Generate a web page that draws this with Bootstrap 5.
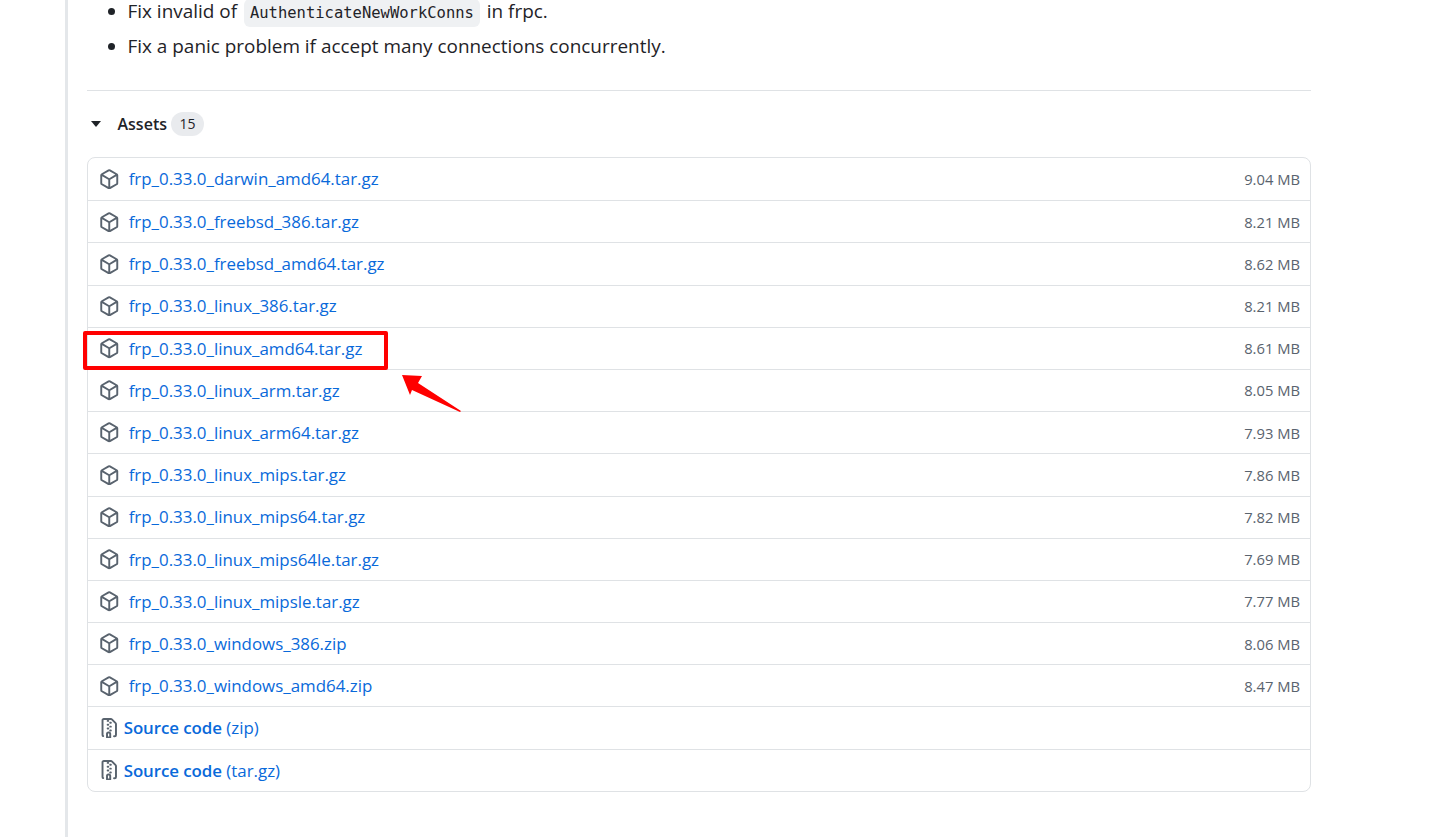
<!DOCTYPE html>
<html lang="en">
<head>
<meta charset="utf-8">
<title>frp release assets</title>
<link href="https://cdn.jsdelivr.net/npm/bootstrap@5.3.0/dist/css/bootstrap.min.css" rel="stylesheet">
<style>
html,body{height:837px;overflow:hidden}
body{background:#fff;color:#1f2328;font-family:"Open Sans","Noto Sans","Liberation Sans",sans-serif;font-size:17px;position:relative}
.rail{display:flow-root;margin-left:65px;width:1246px;height:837px;border-left:3.5px solid #e4e7ea;padding-left:18.5px}
.notes{margin:-6.5px 0 0;padding-left:41px;font-size:18.93px;line-height:35px}
.notes code{font-family:"DejaVu Sans Mono","Liberation Mono",monospace;font-size:15.5px;line-height:20px;color:#1f2328;background:#eff1f3;border-radius:6px;padding:4px 6px;margin:0 2px;display:inline-block}
.sep{height:1px;background:#dfe2e5;margin:26.5px 0 0}
.assets-head{height:66px;font-size:16px;font-weight:600}
.caret{width:0;height:0;border-left:5.5px solid transparent;border-right:5.5px solid transparent;border-top:6px solid #1f2328;margin:0 17px 0 4px}
.count{background:#e9ebee;border-radius:20px;font-size:14px;font-weight:400;padding:2px 8.5px;margin-left:4px;line-height:20px}
.asset-box{border:1px solid #dfe2e5;border-radius:8px;overflow:hidden}
.asset-row{height:42.2px;border-top:1px solid #dfe2e5;padding:0 10px 0 11.2px}
.asset-row:first-child{border-top:0}
.asset-row a{color:#0969da;text-decoration:none;font-size:16.9px;font-weight:500}
.asset-row .ico{width:20.5px;height:20.5px;fill:#59636e;margin-right:9.5px;flex:none}
.asset-row .ico-zip{margin-right:4.5px}
.strong-label{font-weight:600;letter-spacing:-.08px}
.ext{font-weight:400}
.size{color:#59636e;font-size:14.75px}
.callout{position:absolute;left:83px;top:331px;width:305px;height:39px;border:4px solid #f00;border-radius:2px}
.pointer{position:absolute;left:398px;top:370px}
</style>
</head>
<body>
<svg width="0" height="0" class="position-absolute">
<symbol id="pkg" viewBox="0 0 16 16"><path d="m8.878.392 5.25 3.045c.54.314.872.89.872 1.514v6.098a1.75 1.75 0 0 1-.872 1.514l-5.25 3.045a1.75 1.75 0 0 1-1.756 0l-5.25-3.045A1.75 1.75 0 0 1 1 11.049V4.951c0-.624.332-1.201.872-1.514L7.122.392a1.75 1.75 0 0 1 1.756 0ZM7.875 1.69l-4.63 2.685L8 7.133l4.755-2.758-4.63-2.685a.248.248 0 0 0-.25 0ZM2.5 5.677v5.372c0 .09.047.171.125.216l4.625 2.683V8.432Zm6.25 8.271 4.625-2.683a.25.25 0 0 0 .125-.216V5.677L8.75 8.432Z"/></symbol>
<symbol id="zipf" viewBox="0 0 16 16"><path d="M3.5 1.75v11.5c0 .09.048.173.126.217a.75.75 0 0 1-.752 1.298A1.748 1.748 0 0 1 2 13.25V1.75C2 .784 2.784 0 3.75 0h5.586c.464 0 .909.185 1.237.513l2.914 2.914c.329.328.513.773.513 1.237v8.586A1.75 1.75 0 0 1 12.25 15h-.5a.75.75 0 0 1 0-1.5h.5a.25.25 0 0 0 .25-.25V4.664a.25.25 0 0 0-.073-.177L9.513 1.573a.25.25 0 0 0-.177-.073H7.25a.75.75 0 0 1 0 1.5h-.5a.75.75 0 0 1 0-1.5h-3a.25.25 0 0 0-.25.25Zm3.75 8.75h.5c.966 0 1.75.784 1.75 1.75v3a.75.75 0 0 1-.75.75h-2.5a.75.75 0 0 1-.75-.75v-3c0-.966.784-1.75 1.75-1.75ZM6 5.25a.75.75 0 0 1 .75-.75h.5a.75.75 0 0 1 0 1.5h-.5A.75.75 0 0 1 6 5.25Zm.75 2.25h.5a.75.75 0 0 1 0 1.5h-.5a.75.75 0 0 1 0-1.5ZM8 6.75A.75.75 0 0 1 8.75 6h.5a.75.75 0 0 1 0 1.5h-.5A.75.75 0 0 1 8 6.75ZM8.75 3h.5a.75.75 0 0 1 0 1.5h-.5a.75.75 0 0 1 0-1.5ZM8 9.75A.75.75 0 0 1 8.75 9h.5a.75.75 0 0 1 0 1.5h-.5A.75.75 0 0 1 8 9.75Zm-1 2.5v2.25h1v-2.25a.25.25 0 0 0-.25-.25h-.5a.25.25 0 0 0-.25.25Z"/></symbol>
</svg>
<div class="rail">
  <ul class="notes">
    <li>Fix invalid of <code>AuthenticateNewWorkConns</code> in frpc.</li>
    <li>Fix a panic problem if accept many connections concurrently.</li>
  </ul>
  <div class="sep"></div>
  <div class="assets-head d-flex align-items-center"><span class="caret"></span><span>Assets</span><span class="count">15</span></div>
  <div class="asset-box">
    <div class="asset-row d-flex align-items-center justify-content-between"><div class="d-flex align-items-center"><svg class="ico"><use href="#pkg"/></svg><a href="#">frp_0.33.0_darwin_amd64.tar.gz</a></div><span class="size">9.04 MB</span></div>
    <div class="asset-row d-flex align-items-center justify-content-between"><div class="d-flex align-items-center"><svg class="ico"><use href="#pkg"/></svg><a href="#">frp_0.33.0_freebsd_386.tar.gz</a></div><span class="size">8.21 MB</span></div>
    <div class="asset-row d-flex align-items-center justify-content-between"><div class="d-flex align-items-center"><svg class="ico"><use href="#pkg"/></svg><a href="#">frp_0.33.0_freebsd_amd64.tar.gz</a></div><span class="size">8.62 MB</span></div>
    <div class="asset-row d-flex align-items-center justify-content-between"><div class="d-flex align-items-center"><svg class="ico"><use href="#pkg"/></svg><a href="#">frp_0.33.0_linux_386.tar.gz</a></div><span class="size">8.21 MB</span></div>
    <div class="asset-row d-flex align-items-center justify-content-between"><div class="d-flex align-items-center"><svg class="ico"><use href="#pkg"/></svg><a href="#">frp_0.33.0_linux_amd64.tar.gz</a></div><span class="size">8.61 MB</span></div>
    <div class="asset-row d-flex align-items-center justify-content-between"><div class="d-flex align-items-center"><svg class="ico"><use href="#pkg"/></svg><a href="#">frp_0.33.0_linux_arm.tar.gz</a></div><span class="size">8.05 MB</span></div>
    <div class="asset-row d-flex align-items-center justify-content-between"><div class="d-flex align-items-center"><svg class="ico"><use href="#pkg"/></svg><a href="#">frp_0.33.0_linux_arm64.tar.gz</a></div><span class="size">7.93 MB</span></div>
    <div class="asset-row d-flex align-items-center justify-content-between"><div class="d-flex align-items-center"><svg class="ico"><use href="#pkg"/></svg><a href="#">frp_0.33.0_linux_mips.tar.gz</a></div><span class="size">7.86 MB</span></div>
    <div class="asset-row d-flex align-items-center justify-content-between"><div class="d-flex align-items-center"><svg class="ico"><use href="#pkg"/></svg><a href="#">frp_0.33.0_linux_mips64.tar.gz</a></div><span class="size">7.82 MB</span></div>
    <div class="asset-row d-flex align-items-center justify-content-between"><div class="d-flex align-items-center"><svg class="ico"><use href="#pkg"/></svg><a href="#">frp_0.33.0_linux_mips64le.tar.gz</a></div><span class="size">7.69 MB</span></div>
    <div class="asset-row d-flex align-items-center justify-content-between"><div class="d-flex align-items-center"><svg class="ico"><use href="#pkg"/></svg><a href="#">frp_0.33.0_linux_mipsle.tar.gz</a></div><span class="size">7.77 MB</span></div>
    <div class="asset-row d-flex align-items-center justify-content-between"><div class="d-flex align-items-center"><svg class="ico"><use href="#pkg"/></svg><a href="#">frp_0.33.0_windows_386.zip</a></div><span class="size">8.06 MB</span></div>
    <div class="asset-row d-flex align-items-center justify-content-between"><div class="d-flex align-items-center"><svg class="ico"><use href="#pkg"/></svg><a href="#">frp_0.33.0_windows_amd64.zip</a></div><span class="size">8.47 MB</span></div>
    <div class="asset-row d-flex align-items-center"><svg class="ico ico-zip"><use href="#zipf"/></svg><a href="#"><span class="strong-label">Source code</span> <span class="ext">(zip)</span></a></div>
    <div class="asset-row d-flex align-items-center"><svg class="ico ico-zip"><use href="#zipf"/></svg><a href="#"><span class="strong-label">Source code</span> <span class="ext">(tar.gz)</span></a></div>
  </div>
</div>
<div class="callout"></div>
<svg class="pointer" width="66" height="44" viewBox="0 0 66 44"><polygon points="4,5 24,6 20,13 63,41 62,42 14,20 12,25" fill="#f00"/></svg>
</body>
</html>
